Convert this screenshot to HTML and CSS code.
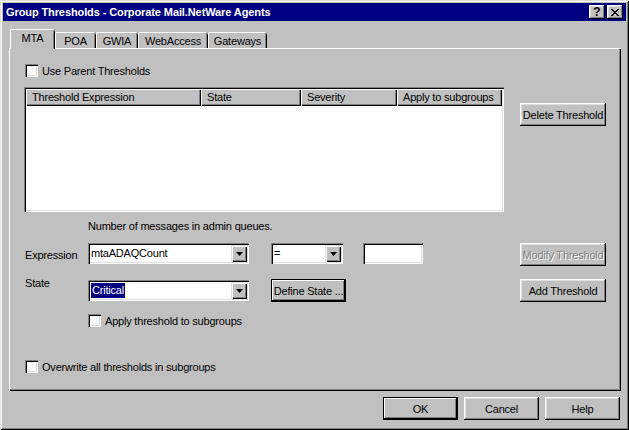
FILE: index.html
```html
<!DOCTYPE html>
<html>
<head>
<meta charset="utf-8">
<link rel="stylesheet" href="styles.css">
</head>
<body>
<div class="window">
  <div class="titlebar">
    <span class="title">Group Thresholds - Corporate Mail.NetWare Agents</span>
    <div class="caption-btns">
      <span class="cap-btn help">?</span>
      <span class="cap-btn close"><svg width="8" height="7" viewBox="0 0 8 7"><path d="M0 0h2v1h1v1h2v-1h1v-1h2v1h-1v1h-1v1h-1v1h1v1h1v1h1v1h-2v-1h-1v-1h-2v1h-1v1h-2v-1h1v-1h1v-1h1v-1h-1v-1h-1v-1h-1z" fill="#000"/></svg></span>
    </div>
  </div>
  <div class="tabs">
    <div class="tab active w-mta">MTA</div>
    <div class="tab w-poa">POA</div>
    <div class="tab w-gwia">GWIA</div>
    <div class="tab w-web">WebAccess</div>
    <div class="tab w-gate">Gateways</div>
  </div>
  <div class="panel">
    <label class="check-row">
      <span class="checkbox"></span><span class="check-label">Use Parent Thresholds</span>
    </label>
    <div class="list-row">
      <div class="listview">
        <div class="lv-header">
          <div class="lv-col c1">Threshold Expression</div>
          <div class="lv-col c2">State</div>
          <div class="lv-col c3">Severity</div>
          <div class="lv-col c4">Apply to subgroups</div>
        </div>
      </div>
      <button class="btn btn-delete">Delete Threshold</button>
    </div>
    <div class="desc">Number of messages in admin queues.</div>
    <div class="form-row row-expr">
      <span class="field-label">Expression</span>
      <div class="combo combo-wide"><span class="combo-text">mtaADAQCount</span><span class="drop"><svg width="7" height="4" viewBox="0 0 7 4"><path d="M0 0h7L3.5 4z" fill="#000"/></svg></span></div>
      <div class="combo combo-op"><span class="combo-text">=</span><span class="drop"><svg width="7" height="4" viewBox="0 0 7 4"><path d="M0 0h7L3.5 4z" fill="#000"/></svg></span></div>
      <div class="edit"></div>
      <button class="btn btn-modify" disabled>Modify Threshold</button>
    </div>
    <div class="form-row row-state">
      <span class="field-label state-label">State</span>
      <div class="combo combo-wide combo-state"><span class="combo-text"><span class="sel">Critical</span></span><span class="drop"><svg width="7" height="4" viewBox="0 0 7 4"><path d="M0 0h7L3.5 4z" fill="#000"/></svg></span></div>
      <button class="btn btn-default btn-define">Define State ...</button>
      <button class="btn btn-add">Add Threshold</button>
    </div>
    <label class="check-row check-apply">
      <span class="checkbox"></span><span class="check-label">Apply threshold to subgroups</span>
    </label>
    <label class="check-row check-overwrite">
      <span class="checkbox"></span><span class="check-label">Overwrite all thresholds in subgroups</span>
    </label>
  </div>
  <div class="footer">
    <button class="btn btn-default btn-foot">OK</button>
    <button class="btn btn-foot">Cancel</button>
    <button class="btn btn-foot">Help</button>
  </div>
</div>
</body>
</html>
```
FILE: styles.css
```css
* { box-sizing: border-box; }
html, body { margin: 0; padding: 0; }
body {
  width: 629px;
  height: 430px;
  background: #c0c0c0;
  font-family: "Liberation Sans", Arial, sans-serif;
  font-size: 11px;
  letter-spacing: -0.2px;
  color: #000;
  overflow: hidden;
}
.window {
  width: 629px;
  height: 430px;
  background: #c0c0c0;
  padding: 3px;
  box-shadow: inset 1px 1px #dfdfdf, inset -1px -1px #000, inset 2px 2px #fff, inset -2px -2px #808080;
}
.titlebar {
  height: 18px;
  background: #000080;
  color: #fff;
  display: flex;
  align-items: center;
  padding: 0 3px 0 3px;
}
.title {
  font-weight: bold;
  letter-spacing: -0.1px;
  flex: 1;
  white-space: nowrap;
}
.caption-btns { display: flex; gap: 2px; }
.cap-btn {
  width: 16px;
  height: 14px;
  background: #c0c0c0;
  box-shadow: inset -1px -1px #000, inset 1px 1px #fff, inset -2px -2px #808080, inset 2px 2px #dfdfdf;
  display: flex;
  align-items: center;
  justify-content: center;
  color: #000;
  font-weight: bold;
  font-size: 12px;
  letter-spacing: 0;
  line-height: 14px;
}
.cap-btn svg { display: block; margin-left: -1px; }

/* tabs */
.tabs {
  display: flex;
  align-items: flex-end;
  height: 19px;
  margin-top: 8px;
  padding-left: 7px;
}
.tab {
  height: 16px;
  background: #c0c0c0;
  border-radius: 2px 2px 0 0;
  box-shadow: inset 1px 0 #fff, inset 0 1px #fff, inset -1px 0 #000, inset -2px 0 #808080;
  display: flex;
  align-items: center;
  justify-content: center;
  padding-top: 1px;
  white-space: nowrap;
}
.tab.active {
  height: 20px;
  margin-bottom: -1px;
  position: relative;
  z-index: 1;
  align-items: flex-start;
  padding-top: 3px;
}
.w-mta { width: 45px; }
.w-poa { width: 41px; }
.w-gwia { width: 42px; }
.w-web { width: 70px; }
.w-gate { width: 59px; }

/* panel */
.panel {
  margin-left: 6px;
  width: 612px;
  height: 343px;
  box-shadow: inset 1px 1px #fff, inset -1px -1px #000, inset -2px -2px #808080;
  padding: 16px 0 0 16px;
}
.check-row {
  display: flex;
  align-items: center;
  height: 13px;
}
.checkbox {
  width: 13px;
  height: 13px;
  background: #fff;
  box-shadow: inset 1px 1px #808080, inset 2px 2px #000, inset -1px -1px #fff, inset -2px -2px #dfdfdf;
  flex: none;
}
.check-label { margin-left: 4px; white-space: nowrap; }

.list-row {
  display: flex;
  align-items: flex-start;
  margin-top: 10px;
  margin-left: -1px;
}
.listview {
  width: 480px;
  height: 125px;
  background: #fff;
  padding: 2px;
  box-shadow: inset 1px 1px #808080, inset 2px 2px #000, inset -1px -1px #fff, inset -2px -2px #dfdfdf;
}
.lv-header { display: flex; height: 17px; }
.lv-col {
  height: 17px;
  background: #c0c0c0;
  box-shadow: inset 1px 1px #fff, inset -1px -1px #000, inset -2px -2px #808080;
  padding-left: 6px;
  line-height: 16px;
  white-space: nowrap;
}
.c1 { width: 175px; }
.c2 { width: 100px; }
.c3 { width: 96px; }
.c4 { width: 105px; }

.btn {
  font-family: inherit;
  font-size: 11px;
  letter-spacing: -0.2px;
  color: #000;
  background: #c0c0c0;
  border: 0;
  padding: 0;
  margin: 0;
  height: 23px;
  box-shadow: inset -1px -1px #000, inset 1px 1px #fff, inset -2px -2px #808080, inset 2px 2px #dfdfdf;
  white-space: nowrap;
}
.btn-default {
  box-shadow: inset 0 0 0 1px #000, inset -2px -2px #000, inset 2px 2px #fff, inset -3px -3px #808080;
}
.btn:disabled { color: #808080; text-shadow: 1px 1px 0 #fff; }
.btn-delete { width: 86px; margin-left: 16px; margin-top: 16px; }

.desc { margin-left: 63px; margin-top: 8px; line-height: 13px; }

.form-row { display: flex; align-items: flex-start; }
.row-expr { margin-top: 10px; }
.row-state { margin-top: 13px; }
.field-label { width: 63px; flex: none; line-height: 13px; margin-top: 6px; }
.state-label { margin-top: -2px; }

.combo {
  height: 21px;
  background: #fff;
  padding: 2px;
  box-shadow: inset 1px 1px #808080, inset 2px 2px #000, inset -1px -1px #fff, inset -2px -2px #dfdfdf;
  display: flex;
  align-items: stretch;
}
.combo-wide { width: 161px; }
.combo-state { margin-top: 1px; }
.combo-op { width: 72px; margin-left: 22px; }
.combo-text { flex: 1; padding-left: 1px; line-height: 17px; white-space: nowrap; }
.sel { background: #000080; color: #fff; padding: 1px 1px 2px 1px; }
.drop {
  width: 16px;
  height: 17px;
  background: #c0c0c0;
  box-shadow: inset 1px 1px #dfdfdf, inset 2px 2px #fff, inset -1px -1px #000, inset -2px -2px #808080;
  display: flex;
  align-items: center;
  justify-content: center;
}
.drop svg { display: block; }
.edit {
  width: 60px;
  height: 21px;
  margin-left: 20px;
  background: #fff;
  box-shadow: inset 1px 1px #808080, inset 2px 2px #000, inset -1px -1px #fff, inset -2px -2px #dfdfdf;
}
.btn-modify { width: 86px; margin-left: 97px; }
.btn-define { width: 75px; margin-left: 22px; }
.btn-add { width: 86px; margin-left: 174px; }

.check-apply { margin-top: 12px; margin-left: 63px; }
.check-overwrite { margin-top: 33px; }

.footer {
  display: flex;
  justify-content: flex-end;
  gap: 6px;
  margin-top: 6px;
  padding-right: 6px;
}
.btn-foot { width: 75px; }
```
